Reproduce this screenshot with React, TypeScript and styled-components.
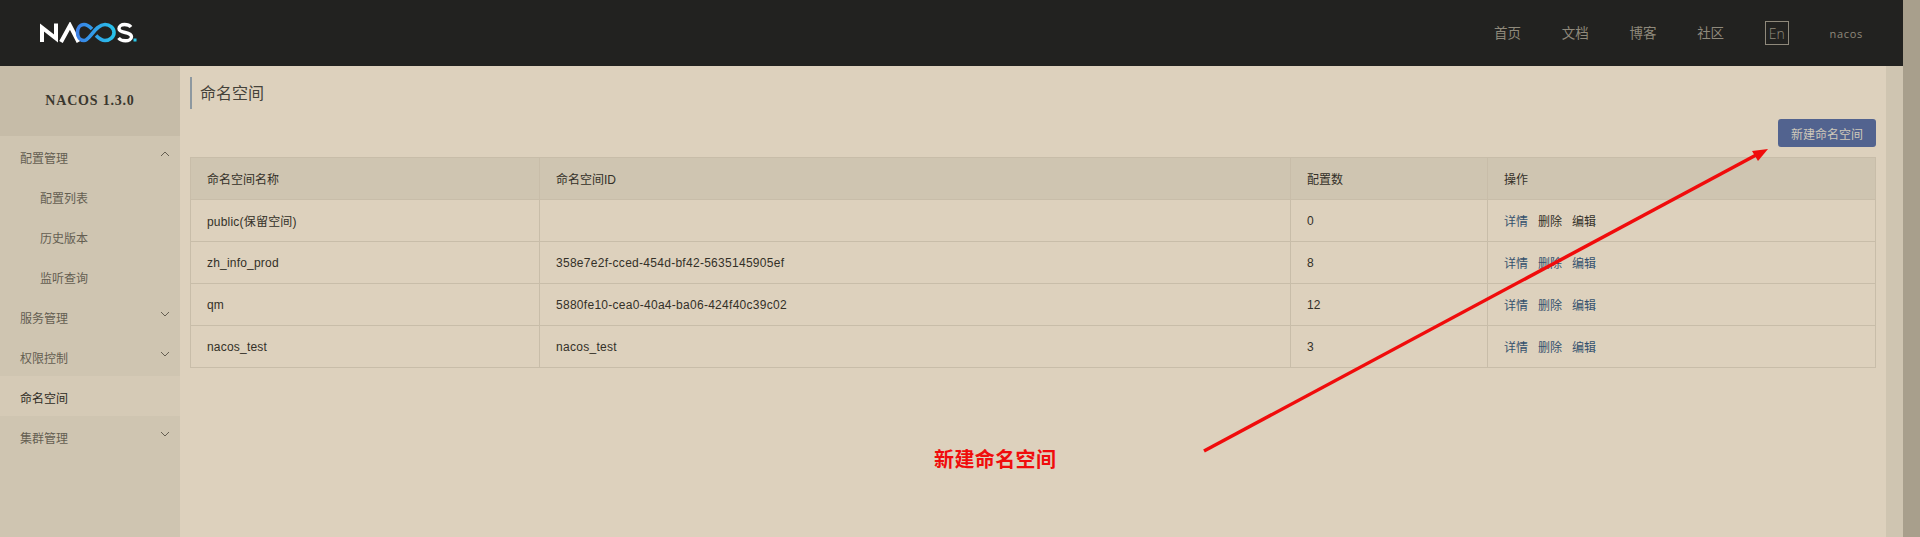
import styled, { createGlobalStyle } from "styled-components";

const GlobalStyle = createGlobalStyle`
  html, body {
    margin: 0;
    height: 537px;
    overflow: hidden;
    background: #ddd1bd;
    font-family: "Liberation Sans", "Noto Sans CJK SC", sans-serif;
    font-size: 12px;
    color: #333028;
  }
`;

const Page = styled.div`
  position: relative;
  display: flex;
  width: 1920px;
  height: 537px;
  overflow: hidden;
`;
const Frame = styled.div`
  flex: 1;
  display: flex;
  flex-direction: column;
  min-width: 0;
`;
const WindowScrollbar = styled.div`
  width: 17px;
  background: #a89f8c;
`;

const Header = styled.header`
  height: 66px;
  flex-shrink: 0;
  display: flex;
  align-items: center;
  padding: 0 40px 0 39px;
  background: #222220;
`;
const Nav = styled.nav`
  margin-left: auto;
  display: flex;
  align-items: center;
  gap: 40.7px;
  color: #8f897b;
`;
const NavLink = styled.a`
  font-size: 13.5px;
  line-height: 20px;
  margin-top: 1px;
`;
const LangBox = styled.span`
  box-sizing: border-box;
  width: 24px;
  height: 24px;
  border: 1px solid #8f897b;
  display: flex;
  align-items: center;
  justify-content: center;
  font-family: "Open Sans", sans-serif;
  font-size: 14px;
  font-weight: 300;
`;
const UserName = styled.span`
  font-family: "Open Sans", sans-serif;
  font-size: 11px;
  letter-spacing: 0.7px;
`;

const Body = styled.div`
  flex: 1;
  display: flex;
  min-height: 0;
`;
const Aside = styled.aside`
  width: 180px;
  flex-shrink: 0;
  background: #cfc5b1;
`;
const Version = styled.div`
  height: 70px;
  display: flex;
  align-items: center;
  justify-content: center;
  background: #c6bca8;
  font-family: "Liberation Serif", serif;
  font-size: 14px;
  font-weight: 700;
  letter-spacing: 0.8px;
  color: #3a372e;
`;
const MenuItem = styled.div<{ $sub?: boolean; $active?: boolean }>`
  height: 40px;
  display: flex;
  align-items: center;
  justify-content: space-between;
  box-sizing: border-box;
  padding: 2px 10px 0 ${p => (p.$sub ? "40px" : "20px")};
  background: ${p => (p.$active ? "#d5cab6" : "transparent")};
  color: ${p => (p.$active ? "#2e2b24" : "#645e51")};
`;
const Caret = styled.svg`
  width: 10px;
  height: 6px;
  margin-top: -6px;
  fill: none;
  stroke: #645e51;
  stroke-width: 1;
`;

const Main = styled.main`
  flex: 1;
  min-width: 0;
  padding: 11px 10px 0;
`;
const Title = styled.h1`
  margin: 0;
  height: 32px;
  box-sizing: border-box;
  border-left: 2px solid #8d98a0;
  padding: 2px 0 0 8px;
  font-size: 16px;
  font-weight: 400;
  line-height: 30px;
  color: #45423a;
`;
const Actions = styled.div`
  display: flex;
  justify-content: flex-end;
  margin: 10px 0;
`;
const PrimaryButton = styled.button`
  width: 98px;
  height: 28px;
  padding: 0;
  border: 0;
  border-radius: 3px;
  background: #52638f;
  color: #cfc8ba;
  font: inherit;
`;
const Table = styled.table`
  width: 100%;
  table-layout: fixed;
  border-collapse: collapse;
`;
const HeadCell = styled.th<{ $width?: number }>`
  width: ${p => (p.$width ? `${p.$width}px` : "auto")};
  height: 42px;
  box-sizing: border-box;
  padding: 0 16px;
  border: 1px solid #c8bda9;
  background: #cfc5b1;
  font-weight: 400;
  text-align: left;
`;
const Cell = styled.td<{ $spacing?: number }>`
  height: 42px;
  box-sizing: border-box;
  padding: 0 16px;
  border: 1px solid #c8bda9;
  letter-spacing: ${p => p.$spacing ?? 0}px;
`;
const OpLink = styled.a<{ $muted?: boolean }>`
  margin-right: 10px;
  color: ${p => (p.$muted ? "#333028" : "#35516e")};
`;
const Strip = styled.div`
  width: 17px;
  flex-shrink: 0;
  background: #cfc5b1;
`;

const ArrowLayer = styled.svg`
  position: absolute;
  inset: 0;
  width: 1920px;
  height: 537px;
  pointer-events: none;
`;
const Callout = styled.span`
  position: absolute;
  left: 934px;
  top: 445px;
  font-family: "Noto Sans CJK SC", sans-serif;
  font-size: 20px;
  font-weight: 700;
  letter-spacing: 0.4px;
  line-height: 28px;
  color: #f00c0c;
`;

function Logo() {
  return (
    <svg width="100" height="22" viewBox="0 0 100 22" fill="none" role="img" aria-label="NACOS">
      <defs>
        <linearGradient id="loop" x1="38" x2="78" y1="0" y2="0" gradientUnits="userSpaceOnUse">
          <stop offset="0" stopColor="#3a7fe6" />
          <stop offset="1" stopColor="#27c8ea" />
        </linearGradient>
      </defs>
      <path d="M3 20V5.500L17 16.500V1.500" stroke="#fff" strokeWidth="4" />
      <path d="M22 20L31 3.500L39.500 20" stroke="#fff" strokeWidth="4" />
      <path
        d="M53 7C50 4 47.500 2.500 45 2.500C41 2.500 38.500 6 38.500 10.500C38.500 15 41 18.500 45 18.500C51 18.500 56 2.500 66 2.500C71 2.500 75 6 75 10.500C75 15 71 18.500 66 18.500C62 18.500 59.500 16 57 13.500"
        stroke="url(#loop)"
        strokeWidth="3.600"
      />
      <path
        d="M92 5C90.500 3.200 88 2.500 85.500 2.500C82.500 2.500 80 4 80 6.500C80 12 92.500 9 92.500 14.800C92.500 17.500 89.500 18.800 86.500 18.800C83.500 18.800 81 17.800 79.500 16"
        stroke="#fff"
        strokeWidth="3.400"
      />
      <rect x="94.500" y="16.500" width="3" height="3" fill="#27c8ea" />
    </svg>
  );
}

const Up = () => (
  <Caret viewBox="0 0 10 6">
    <path d="M1 5L5 1L9 5" />
  </Caret>
);
const Down = () => (
  <Caret viewBox="0 0 10 6">
    <path d="M1 1L5 5L9 1" />
  </Caret>
);

const rows = [
  { name: "public(保留空间)", id: "", count: 0, muted: true },
  { name: "zh_info_prod", id: "358e7e2f-cced-454d-bf42-5635145905ef", count: 8 },
  { name: "qm", id: "5880fe10-cea0-40a4-ba06-424f40c39c02", count: 12 },
  { name: "nacos_test", id: "nacos_test", count: 3 },
];

export default function App() {
  return (
    <Page>
      <GlobalStyle />
      <Frame>
        <Header>
          <Logo />
          <Nav>
            <NavLink>首页</NavLink>
            <NavLink>文档</NavLink>
            <NavLink>博客</NavLink>
            <NavLink>社区</NavLink>
            <LangBox>En</LangBox>
            <UserName>nacos</UserName>
          </Nav>
        </Header>
        <Body>
          <Aside>
            <Version>NACOS 1.3.0</Version>
            <MenuItem>配置管理<Up /></MenuItem>
            <MenuItem $sub>配置列表</MenuItem>
            <MenuItem $sub>历史版本</MenuItem>
            <MenuItem $sub>监听查询</MenuItem>
            <MenuItem>服务管理<Down /></MenuItem>
            <MenuItem>权限控制<Down /></MenuItem>
            <MenuItem $active>命名空间</MenuItem>
            <MenuItem>集群管理<Down /></MenuItem>
          </Aside>
          <Main>
            <Title>命名空间</Title>
            <Actions>
              <PrimaryButton>新建命名空间</PrimaryButton>
            </Actions>
            <Table>
              <thead>
                <tr>
                  <HeadCell $width={349}>命名空间名称</HeadCell>
                  <HeadCell $width={751}>命名空间ID</HeadCell>
                  <HeadCell $width={197}>配置数</HeadCell>
                  <HeadCell>操作</HeadCell>
                </tr>
              </thead>
              <tbody>
                {rows.map(row => (
                  <tr key={row.name}>
                    <Cell $spacing={0.2}>{row.name}</Cell>
                    <Cell $spacing={0.28}>{row.id}</Cell>
                    <Cell>{row.count}</Cell>
                    <Cell>
                      <OpLink>详情</OpLink>
                      <OpLink $muted={row.muted}>删除</OpLink>
                      <OpLink $muted={row.muted}>编辑</OpLink>
                    </Cell>
                  </tr>
                ))}
              </tbody>
            </Table>
          </Main>
          <Strip />
        </Body>
      </Frame>
      <WindowScrollbar />
      <ArrowLayer viewBox="0 0 1920 537">
        <path d="M1204 451L1758 154" stroke="#f00c0c" strokeWidth="3.500" fill="none" />
        <path d="M1768 149L1752 151L1758 161Z" fill="#f00c0c" />
      </ArrowLayer>
      <Callout>新建命名空间</Callout>
    </Page>
  );
}
